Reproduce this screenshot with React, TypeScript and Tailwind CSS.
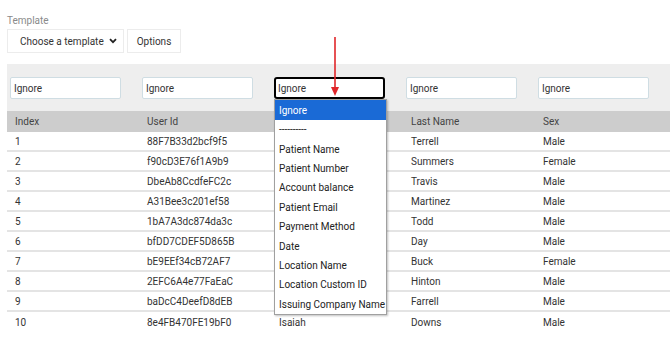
import React from 'react';

const rows = [
  ['1', '88F7B33d2bcf9f5', 'Terrell', 'Male'],
  ['2', 'f90cD3E76f1A9b9', 'Summers', 'Female'],
  ['3', 'DbeAb8CcdfeFC2c', 'Travis', 'Male'],
  ['4', 'A31Bee3c201ef58', 'Martinez', 'Male'],
  ['5', '1bA7A3dc874da3c', 'Todd', 'Male'],
  ['6', 'bfDD7CDEF5D865B', 'Day', 'Male'],
  ['7', 'bE9EEf34cB72AF7', 'Buck', 'Female'],
  ['8', '2EFC6A4e77FaEaC', 'Hinton', 'Male'],
  ['9', 'baDcC4DeefD8dEB', 'Farrell', 'Male'],
  ['10', '8e4FB470FE19bF0', 'Isaiah', 'Downs', 'Male'],
];

const options = [
  '----------',
  'Patient Name',
  'Patient Number',
  'Account balance',
  'Patient Email',
  'Payment Method',
  'Date',
  'Location Name',
  'Location Custom ID',
  'Issuing Company Name',
];

export default function App() {
  return (
    <div
      className="relative w-[670px] h-[347px] overflow-hidden bg-white text-[10px] text-[#333] whitespace-nowrap"
      style={{ fontFamily: 'Roboto, "Liberation Sans", sans-serif' }}
    >
      <div className="pl-[7px] pt-[14px]">
        <div className="text-[#8a8a8a] leading-[13px]">Template</div>
        <div className="flex gap-[3px] mt-[2px]">
          <div className="w-[117px] h-[24px] border border-[#ececec] flex items-center justify-between pl-[12px] pr-[6px] text-[#333]">
            <span>Choose a template</span>
            <svg width="8" height="6" viewBox="0 0 8 6">
              <path d="M1 1.2 L4 4.2 L7 1.2" fill="none" stroke="#222" strokeWidth="1.8" />
            </svg>
          </div>
          <div className="w-[54px] h-[24px] border border-[#ececec] flex items-center justify-center">Options</div>
        </div>
      </div>

      <div className="ml-[7px] mt-[11px] w-[663px]">
        <div className="bg-[#eeeeee] flex pt-[13px] pb-[12px]">
          {[0, 1, 2, 3, 4].map((i) => (
            <div key={i} className="w-[132px] pl-[3px]">
              {i === 2 ? (
                <div className="w-[111px] h-[22px] border-2 border-black rounded-[3px] bg-white flex items-center pl-[2px]">Ignore</div>
              ) : (
                <div className="w-[111px] h-[22px] border border-[#cfdde3] rounded-[2px] bg-white flex items-center pl-[3px]">Ignore</div>
              )}
            </div>
          ))}
        </div>
        <div className="flex bg-[#cdcdcd] h-[21px] items-center text-[#444]">
          {['Index', 'User Id', '', 'Last Name', 'Sex'].map((h, i) => (
            <div key={i} className="w-[132px] pl-[8px]">{h}</div>
          ))}
        </div>
        {rows.map((r, idx) => {
          const cells = r.length === 5 ? [r[0], r[1], r[2], r[3], r[4]] : [r[0], r[1], '', r[2], r[3]];
          return (
            <div
              key={idx}
              className={`flex h-[20px] items-center pt-[1px] ${idx < rows.length - 1 ? 'border-b-2 border-[#e4e4e4]' : ''}`}
            >
              {cells.map((c, i) => (
                <div key={i} className="w-[132px] pl-[8px]">{c}</div>
              ))}
            </div>
          );
        })}
      </div>

      <div className="absolute left-[274px] top-[99px] w-[113px] bg-white border border-[#a0a0a0] shadow-[1px_1px_2px_rgba(0,0,0,0.25)]">
        <div className="h-[20px] bg-[#1a6ad6] text-white flex items-center pl-[4px]">Ignore</div>
        {options.map((o) => (
          <div key={o} className="h-[19.4px] flex items-center pl-[4px] text-[#222]">{o}</div>
        ))}
      </div>

      <svg className="absolute left-[330px] top-[37px]" width="10" height="60" viewBox="0 0 10 60">
        <line x1="5" y1="0" x2="5" y2="52" stroke="#e0262a" strokeWidth="1.6" />
        <path d="M1 50 L9 50 L5 59 Z" fill="#e0262a" />
      </svg>
    </div>
  );
}
